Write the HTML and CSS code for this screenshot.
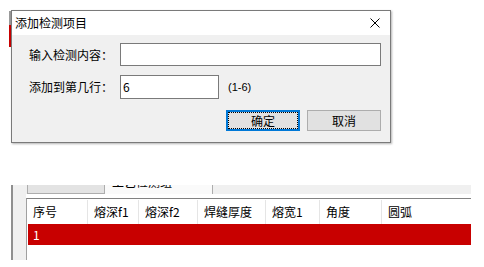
FILE: index.html
```html
<!DOCTYPE html>
<html lang="zh">
<head>
<meta charset="utf-8">
<link rel="stylesheet" href="styles.css">
</head>
<body>
<div class="desk">
  <div class="edge"></div>
  <div class="app">
    <div class="tabs">
      <div class="tab"></div>
      <div class="tab active"><span class="tab-text">工艺检测组</span></div>
      <div class="tab-rest"></div>
    </div>
    <div class="page">
      <div class="list">
        <div class="row head">
          <div class="cell c1">序号</div>
          <div class="cell c2">熔深f1</div>
          <div class="cell c3">熔深f2</div>
          <div class="cell c4">焊缝厚度</div>
          <div class="cell c5">熔宽1</div>
          <div class="cell c6">角度</div>
          <div class="cell c7">圆弧</div>
        </div>
        <div class="row sel">
          <div class="cell c1">1</div>
        </div>
      </div>
    </div>
  </div>

  <div class="dialog">
    <div class="titlebar">
      <span class="title">添加检测项目</span>
      <svg class="close" width="10" height="10" viewBox="0 0 10 10"><path d="M0.5 0.5 L9.5 9.5 M9.5 0.5 L0.5 9.5" stroke="#000" stroke-width="1" fill="none"/></svg>
    </div>
    <div class="client">
      <div class="frow">
        <label class="lbl">输入检测内容：</label>
        <div class="input wide"></div>
      </div>
      <div class="frow second">
        <label class="lbl">添加到第几行：</label>
        <div class="input narrow">6</div>
        <span class="hint">(1-6)</span>
      </div>
      <div class="buttons">
        <div class="btn default">确定</div>
        <div class="btn">取消</div>
      </div>
    </div>
  </div>
</div>
</body>
</html>
```
FILE: styles.css
```css
* { box-sizing: border-box; }
html, body { margin: 0; padding: 0; background: #fff; }
body {
  font-family: "Noto Sans CJK SC", "Noto Sans", sans-serif;
  font-size: 12px;
  color: #000;
}
.desk { position: relative; width: 484px; height: 267px; overflow: hidden; }

.edge {
  margin: 11px 0 0 9px;
  width: 2px;
  height: 36px;
  background: linear-gradient(#9a9a9a 0 14px, #c80000 14px);
}

.app {
  margin: 138px 0 0 11px;
  width: 460px;
  height: 75px;
  border-left: 2px solid #8f8f8f;
  background: #f0f0f0;
  display: flex;
  flex-direction: column;
}
.tabs { height: 9px; display: flex; padding-left: 14px; }
.tab {
  width: 78px;
  height: 9px;
  background: #e3e3e3;
  border: 1px solid #adadad;
  border-top: none;
}
.tab.active {
  width: 108px;
  background: #fafafa;
  border: none;
  border-right: 1px solid #adadad;
  overflow: hidden;
  position: relative;
}
.tab-text {
  position: absolute;
  left: 7px;
  top: -11px;
  line-height: 16px;
  white-space: nowrap;
}
.tab-rest { flex: 1; }

.page {
  flex: 1;
  margin-left: 13px;
  background: #fff;
  padding-top: 4px;
}
.list {
  height: 100%;
  border-top: 1px solid #828282;
  border-left: 1px solid #a0a0a0;
  padding-left: 1px;
}
.row { display: flex; }
.head { height: 25px; align-items: center; }
.cell { padding-left: 6px; white-space: nowrap; height: 100%; display: flex; align-items: center; }
.head .cell { border-right: 1px solid #e5e5e5; height: 24px; }
.head .c7 { border-right: none; flex: 1; }
.c1 { width: 60px; padding-left: 5px; }
.c2 { width: 51px; }
.c3 { width: 59px; }
.c4 { width: 68px; }
.c5 { width: 54px; }
.c6 { width: 62px; }
.sel { height: 21px; background: #c80000; color: #fff; }

.dialog {
  position: absolute;
  left: 11px;
  top: 10px;
  width: 380px;
  height: 133px;
  border: 1px solid #7a7a7a;
  background: #f0f0f0;
  box-shadow: 1px 1px 2px rgba(0,0,0,0.3);
  display: flex;
  flex-direction: column;
}
.titlebar {
  height: 24px;
  background: #fff;
  display: flex;
  align-items: center;
  padding-left: 3px;
  padding-right: 10px;
}
.title { font-size: 12px; line-height: 14px; }
.close { margin-left: auto; display: block; }

.client { flex: 1; padding: 8px 9px 0 17px; }
.frow { display: flex; align-items: center; }
.frow.second { margin-top: 9px; }
.lbl { width: 91px; line-height: 14px; }
.input {
  background: #fff;
  border: 1px solid #7a7a7a;
  height: 23px;
  padding: 0 2px;
  display: flex;
  align-items: center;
  line-height: 14px;
}
.input.wide { width: 261px; }
.input.narrow { width: 99px; height: 24px; }
.hint { margin-left: 9px; font-size: 11px; font-family: "Liberation Sans", sans-serif; }

.buttons { display: flex; justify-content: flex-end; gap: 7px; margin-top: 11px; }
.btn {
  width: 74px;
  height: 21px;
  background: #e1e1e1;
  border: 1px solid #adadad;
  display: flex;
  align-items: center;
  justify-content: center;
  line-height: 14px;
  position: relative;
}
.btn.default { border: 2px solid #0078d7; }
.btn.default::after {
  content: "";
  position: absolute;
  inset: 0;
  border: 1px dotted #000;
}
```
